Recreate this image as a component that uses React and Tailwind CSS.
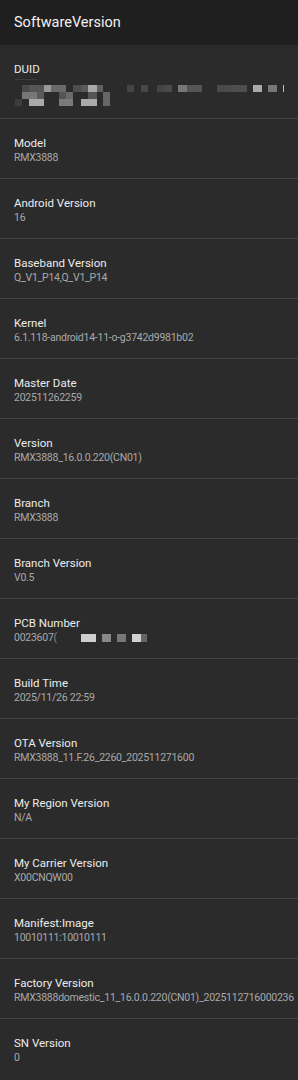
import React from 'react';

const rows = [
  { label: 'Model', value: 'RMX3888' },
  { label: 'Android Version', value: '16' },
  { label: 'Baseband Version', value: 'Q_V1_P14,Q_V1_P14' },
  { label: 'Kernel', value: '6.1.118-android14-11-o-g3742d9981b02' },
  { label: 'Master Date', value: '202511262259' },
  { label: 'Version', value: 'RMX3888_16.0.0.220(CN01)' },
  { label: 'Branch', value: 'RMX3888' },
  { label: 'Branch Version', value: 'V0.5' },
  { label: 'PCB Number', value: 'pcb' },
  { label: 'Build Time', value: '2025/11/26 22:59' },
  { label: 'OTA Version', value: 'RMX3888_11.F.26_2260_202511271600' },
  { label: 'My Region Version', value: 'N/A' },
  { label: 'My Carrier Version', value: 'X00CNQW00' },
  { label: 'Manifest:Image', value: '10010111:10010111' },
  { label: 'Factory Version', value: 'RMX3888domestic_11_16.0.0.220(CN01)_2025112716000236' },
  { label: 'SN Version', value: '0' },
];

// mosaic blocks for the blurred DUID: [x, y, w, color]
const duidBlocks = [
  [22, 0, 7, '#4a4a4a'], [29, 0, 15, '#555'], [44, 0, 7, '#9a9a9a'], [51, 0, 15, '#6a6a6a'],
  [73, 0, 8, '#4e4e4e'], [81, 0, 7, '#595959'], [88, 0, 9, '#a8a8a8'], [97, 0, 6, '#606060'],
  [127, 0, 7, '#444'], [141, 0, 7, '#484848'], [157, 0, 7, '#444'], [164, 0, 8, '#4a4a4a'],
  [178, 0, 9, '#777'], [187, 0, 15, '#555'], [217, 0, 14, '#4a4a4a'], [231, 0, 16, '#4e4e4e'],
  [253, 0, 9, '#aaa'], [268, 0, 9, '#777'], [283, 0, 8, '#bbb'],
  [22, 7, 15, '#777'], [37, 7, 7, '#5a5a5a'], [59, 7, 7, '#555'], [66, 7, 7, '#6a6a6a'],
  [88, 7, 9, '#555'], [103, 7, 7, '#666'],
  [15, 14, 7, '#3c3c3c'], [29, 14, 15, '#aaa'], [59, 14, 14, '#7a7a7a'], [81, 14, 16, '#aaa'],
  [103, 14, 7, '#666'],
];

const pcbBlocks = [
  [0, 15, '#cfcfcf'], [21, 9, '#888'], [36, 9, '#777'], [51, 9, '#d0d0d0'], [60, 6, '#666'],
];

const Row = ({ label, children }) => (
  <div className="border-t border-[#444] px-[14px] pt-[16px] pb-[13px]">
    <div className="text-[11.5px] leading-[16px] text-[#ececec]">{label}</div>
    <div className="text-[10.5px] leading-[14px] tracking-[-0.25px] text-[#a9a9a9] whitespace-nowrap">
      {children}
    </div>
  </div>
);

const App = () => {
  return (
    <div className="min-h-screen w-[298px] bg-[#2b2b2b] font-['Roboto',sans-serif] overflow-hidden">
      <div className="h-[45px] bg-[#1f1f1f] flex items-center px-[14px]">
        <h1 className="text-[14.5px] text-[#f2f2f2] font-normal">SoftwareVersion</h1>
      </div>

      <div className="px-[14px] pt-[16px] pb-[11px]">
        <div className="text-[11.5px] leading-[16px] text-[#ececec]">DUID</div>
        <svg width="284" height="28" viewBox="0 0 284 28" className="block -ml-[14px] mt-[2px]">
          <rect x="15" y="0" width="22" height="1" fill="#3e3e3e" />
          {duidBlocks.map(([x, y, w, c], i) => (
            <rect key={i} x={x} y={y + 6} width={w} height="7" fill={c} />
          ))}
        </svg>
      </div>

      {rows.map((r) => (
        <Row key={r.label} label={r.label}>
          {r.value === 'pcb' ? (
            <span className="flex items-center">
              <span>0023607</span>
              <span className="text-[#8a8a8a]">(</span>
              <svg width="70" height="8" viewBox="0 0 70 8" className="ml-[24px]">
                {pcbBlocks.map(([x, w, c], i) => (
                  <rect key={i} x={x} y="0" width={w} height="8" fill={c} />
                ))}
              </svg>
            </span>
          ) : (
            r.value
          )}
        </Row>
      ))}
    </div>
  );
};

export default App;
